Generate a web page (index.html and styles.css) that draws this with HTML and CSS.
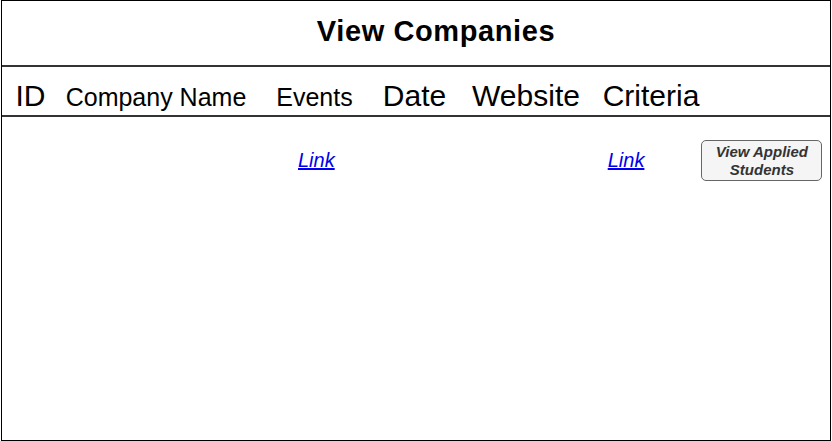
FILE: index.html
```html
<!DOCTYPE html>
<html lang="en">
<head>
<meta charset="utf-8">
<title>View Companies</title>
<link rel="stylesheet" href="styles.css">
</head>
<body>
<div class="frame">
  <div class="title-bar"><h1 class="title">View Companies</h1></div>
  <div class="head-row">
    <span class="col big">ID</span>
    <span class="col small">Company Name</span>
    <span class="col small">Events</span>
    <span class="col big">Date</span>
    <span class="col big">Website</span>
    <span class="col big">Criteria</span>
    <span class="col"></span>
  </div>
  <div class="data-row">
    <a class="link link-events" href="#">Link</a>
    <a class="link link-website" href="#">Link</a>
    <button class="btn" type="button">View Applied<br>Students</button>
  </div>
</div>
</body>
</html>
```
FILE: styles.css
```css
html, body {
  margin: 0;
  padding: 0;
  background: #ffffff;
}
body {
  font-family: "Liberation Sans", Arial, sans-serif;
  color: #000;
}
.frame {
  box-sizing: border-box;
  margin-left: 1px;
  width: 830px;
  height: 441px;
  border: 1px solid #000;
  display: flex;
  flex-direction: column;
}
.title-bar {
  height: 64px;
  border-bottom: 2px solid #333;
  display: flex;
  align-items: center;
  justify-content: center;
  padding-left: 40px;
}
.title {
  margin: 0;
  font-size: 29px;
  font-weight: bold;
  line-height: 1;
  letter-spacing: 0.6px;
  padding-bottom: 4px;
}
.head-row {
  height: 50px;
  border-bottom: 2px solid #333;
  display: grid;
  grid-template-columns: 57px 194px 123px 77px 146px 104px 1fr;
  align-items: baseline;
  padding-top: 7px;
  box-sizing: border-box;
}
.col {
  text-align: center;
  white-space: nowrap;
  line-height: 44px;
}
.big { font-size: 30px; }
.small { font-size: 25px; }
.data-row {
  display: flex;
  align-items: center;
  padding-top: 23px;
  padding-left: 296px;
}
.link {
  color: #0000ee;
  font-style: italic;
  font-size: 20px;
  text-decoration: underline;
}
.link-website {
  margin-left: 273px;
}
.btn {
  margin-left: 57px;
  width: 121px;
  height: 41px;
  box-sizing: border-box;
  border: 1px solid #666;
  border-radius: 5px;
  background: #f5f5f5;
  color: #333;
  font-family: "Liberation Sans", Arial, sans-serif;
  font-size: 15px;
  font-weight: bold;
  font-style: italic;
  line-height: 18px;
  padding: 0;
}
```
